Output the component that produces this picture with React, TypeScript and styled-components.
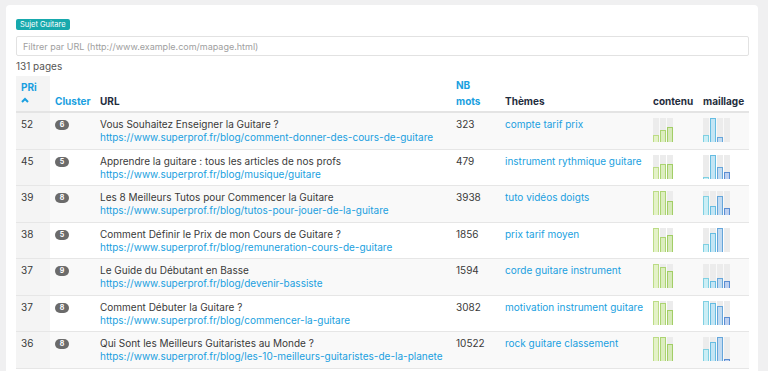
import React from 'react';
import styled, { createGlobalStyle } from 'styled-components';

const GlobalStyle = createGlobalStyle`
  body {
    margin: 0;
    background: #f0f0f1;
    font-family: Inter, "Open Sans", sans-serif;
  }
`;

const Page = styled.div`
  padding: 5px 10px 0 6px;
`;

const Card = styled.div`
  background: #fff;
  border-radius: 4px;
  padding: 14px 9px 20px 10px;
`;

const Tag = styled.span`
  display: block;
  width: fit-content;
  background: #17a9ad;
  color: #fff;
  font-size: 7.5px;
  line-height: 11px;
  padding: 0 4px;
  border-radius: 2px;
`;

const Filter = styled.input`
  display: block;
  width: 100%;
  box-sizing: border-box;
  height: 20px;
  margin-top: 6px;
  padding: 0 6px;
  border: 1px solid #e2e2e2;
  border-radius: 2px;
  font-family: inherit;
  font-size: 9px;
  color: #444;
  outline: none;

  &::placeholder {
    color: #a0a0a0;
  }
`;

const Count = styled.div`
  font-size: 10px;
  line-height: 20px;
  color: #555;
`;

const Table = styled.table`
  width: 100%;
  border-collapse: collapse;
  table-layout: fixed;
  font-size: 10px;
  color: #3a3a3a;
`;

const Th = styled.th<{ $w: number; $sort?: boolean; $active?: boolean }>`
  width: ${(p) => p.$w - 10}px;
  text-align: left;
  vertical-align: bottom;
  padding: 0 5px 2px;
  height: 33px;
  line-height: 16px;
  font-weight: 700;
  white-space: nowrap;
  color: ${(p) => (p.$sort ? '#1a9fe0' : '#1f2d3d')};
  background: ${(p) => (p.$active ? '#f4f4f4' : 'transparent')};
  border-bottom: 2px solid #e4e4e4;
`;

const Chevron = styled.svg`
  display: block;
  width: 8px;
  height: 6px;
  margin: 2px 0 6px;
`;

const Tr = styled.tr<{ $odd: boolean }>`
  background: ${(p) => (p.$odd ? '#f9f9f9' : '#fff')};
  border-bottom: 1px solid #e6e6e6;
`;

const Td = styled.td<{ $active?: boolean }>`
  vertical-align: top;
  height: 26px;
  padding: 5px 5px 4.5px;
  line-height: 13px;
  background: ${(p) => (p.$active ? '#f4f4f4' : 'transparent')};
`;

const Badge = styled.span`
  display: inline-block;
  margin-top: 2px;
  width: 14px;
  height: 10px;
  border-radius: 5px;
  background: #6b6b6b;
  color: #fff;
  font-size: 7px;
  font-weight: 700;
  line-height: 10px;
  text-align: center;
  vertical-align: top;
`;

const Title = styled.div`
  white-space: nowrap;
`;

const Link = styled.a`
  display: block;
  white-space: nowrap;
  color: #1a9fe0;
  text-decoration: none;
`;

const Chart = styled.div`
  display: flex;
  gap: 1px;
  height: 24px;
`;

const Slot = styled.div`
  position: relative;
  width: 6px;
  background: #ececec;
`;

const Fill = styled.div<{ $fill: string; $line: string }>`
  position: absolute;
  left: 0;
  right: 0;
  bottom: 0;
  box-sizing: border-box;
  background: ${(p) => p.$fill};
  border: 1px solid ${(p) => p.$line};
  border-bottom: none;
`;

const green = [
  ['#e4f2c8', '#bcdc86'],
  ['#dcedbf', '#acd472'],
  ['#d6e9b9', '#a2ce66'],
];
const blue = [
  ['#cbeef5', '#7fd0e2'],
  ['#c4e5f4', '#66bde2'],
  ['#c1daf1', '#66a6da'],
  ['#bdd0f0', '#5a8dd2'],
];

function Bars({ values, colors }: { values: number[]; colors: string[][] }) {
  return (
    <Chart>
      {values.map((v, i) => (
        <Slot key={i}>
          {v > 0 && (
            <Fill $fill={colors[i][0]} $line={colors[i][1]} style={{ height: `${v * 100}%` }} />
          )}
        </Slot>
      ))}
    </Chart>
  );
}

const base = 'https://www.superprof.fr/blog/';

const rows = [
  { pri: 52, cl: 6, title: 'Vous Souhaitez Enseigner la Guitare ?', slug: 'comment-donner-des-cours-de-guitare', nb: 323, th: 'compte tarif prix', c: [0.3, 0.48, 0.62], m: [0.3, 1, 0.2, 0] },
  { pri: 45, cl: 5, title: 'Apprendre la guitare : tous les articles de nos profs', slug: 'musique/guitare', nb: 479, th: 'instrument rythmique guitare', c: [0.49, 0.6, 0.6], m: [0.08, 1, 0.49, 0.29] },
  { pri: 39, cl: 8, title: 'Les 8 Meilleurs Tutos pour Commencer la Guitare', slug: 'tutos-pour-jouer-de-la-guitare', nb: 3938, th: 'tuto vidéos doigts', c: [1, 1, 0.6], m: [0.78, 0.39, 0.78, 0.28] },
  { pri: 38, cl: 5, title: 'Comment Définir le Prix de mon Cours de Guitare ?', slug: 'remuneration-cours-de-guitare', nb: 1856, th: 'prix tarif moyen', c: [1, 0.59, 0.68], m: [0.3, 0.78, 1, 0] },
  { pri: 37, cl: 9, title: 'Le Guide du Débutant en Basse', slug: 'devenir-bassiste', nb: 1594, th: 'corde guitare instrument', c: [1, 0.89, 0.7], m: [0.4, 0.29, 0.4, 0.29] },
  { pri: 37, cl: 8, title: 'Comment Débuter la Guitare ?', slug: 'commencer-la-guitare', nb: 3082, th: 'motivation instrument guitare', c: [1, 0.89, 0.6], m: [1, 0.89, 0.79, 0.3] },
  { pri: 36, cl: 8, title: 'Qui Sont les Meilleurs Guitaristes au Monde ?', slug: 'les-10-meilleurs-guitaristes-de-la-planete', nb: 10522, th: 'rock guitare classement', c: [1, 1, 0.7], m: [0.5, 0.79, 1, 0.1] },
];

export default function App() {
  return (
    <Page>
      <GlobalStyle />
      <Card>
        <Tag>Sujet Guitare</Tag>
        <Filter placeholder="Filtrer par URL (http://www.example.com/mapage.html)" />
        <Count>131 pages</Count>
        <Table>
          <thead>
            <tr>
              <Th $w={34} $sort $active>
                PRi
                <Chevron viewBox="0 0 8 6">
                  <path d="M1 5 L4 2 L7 5" fill="none" stroke="#1a9fe0" strokeWidth="2" />
                </Chevron>
              </Th>
              <Th $w={45} $sort>Cluster</Th>
              <Th $w={356}>URL</Th>
              <Th $w={49} $sort>NB<br />mots</Th>
              <Th $w={148}>Thèmes</Th>
              <Th $w={50}>contenu</Th>
              <Th $w={51}>maillage</Th>
            </tr>
          </thead>
          <tbody>
            {rows.map((r, i) => (
              <Tr key={i} $odd={i % 2 === 0}>
                <Td $active>{r.pri}</Td>
                <Td><Badge>{r.cl}</Badge></Td>
                <Td>
                  <Title>{r.title}</Title>
                  <Link href="#">{base + r.slug}</Link>
                </Td>
                <Td>{r.nb}</Td>
                <Td><Link href="#">{r.th}</Link></Td>
                <Td><Bars values={r.c} colors={green} /></Td>
                <Td><Bars values={r.m} colors={blue} /></Td>
              </Tr>
            ))}
          </tbody>
        </Table>
      </Card>
    </Page>
  );
}
